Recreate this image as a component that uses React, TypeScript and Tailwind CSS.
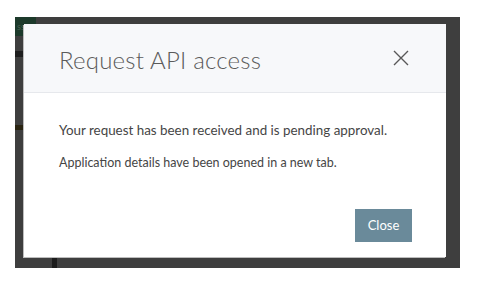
export default function App() {
  return (
    <div className="w-[502px] h-[286px] bg-white pt-[17px] pl-[15px]" style={{ fontFamily: 'Lato, "Open Sans", sans-serif' }}>
      <div className="relative w-[445px] h-[251px] bg-[#3e3e3e] pt-[7px] pl-[9px]">
        {/* page behind the backdrop */}
        <div className="absolute left-0 top-0 w-[21px] h-[19px] bg-[#1d3a2b] text-[9px] text-[#47604f] leading-[19px] pl-[2px] overflow-hidden">ss</div>
        <div className="absolute left-0 top-[34px] w-[9px] h-[6px] bg-[#1e1e1e]" />
        <div className="absolute left-0 top-[108px] w-[9px] h-[5px] bg-[#2a2412]" />
        <div className="absolute left-[37px] top-[240px] w-[5px] h-[11px] bg-[#1c1c1c]" />

        <div className="relative w-[422px] h-[233px] bg-white flex flex-col shadow-[-1px_1px_0_#bdbdbd]">
          <div className="h-[69px] bg-[#f7f8fa] border-b border-[#e6e8ec] flex items-center justify-between pl-[35px] pr-[37px]">
            <h1 className="text-[24px] font-light text-[#5b5b5b] tracking-[0.2px] pt-[3px]">Request API access</h1>
            <svg width="16" height="16" viewBox="0 0 16 16" className="text-[#585858]">
              <path d="M1 1 L15 15 M15 1 L1 15" stroke="currentColor" strokeWidth="1.4" fill="none" />
            </svg>
          </div>
          <div className="flex-1 pl-[35px] pr-[34px] pt-[28px] text-[#454545]">
            <p className="text-[13.4px] leading-[18px]">Your request has been received and is pending approval.</p>
            <p className="text-[12.5px] leading-[16px] mt-[16px]">Application details have been opened in a new tab.</p>
            <div className="flex justify-end mt-[38px]">
              <button className="w-[57px] h-[33px] bg-[#6a8a9a] text-white text-[13px]">Close</button>
            </div>
          </div>
        </div>
      </div>
    </div>
  );
}
